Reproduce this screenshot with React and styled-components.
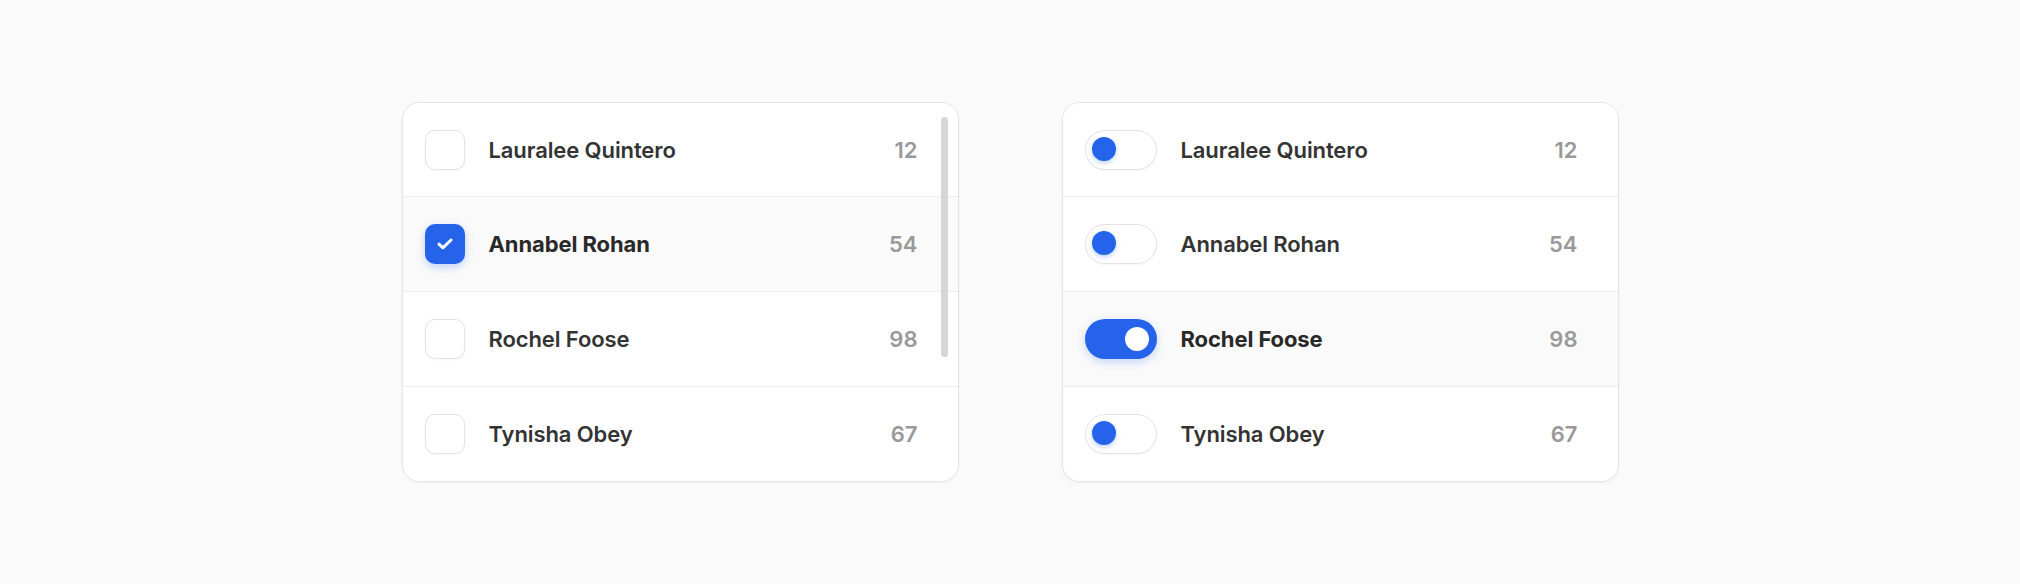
import styled, { createGlobalStyle, css } from 'styled-components';

const people = [
  { name: 'Lauralee Quintero', count: 12 },
  { name: 'Annabel Rohan', count: 54 },
  { name: 'Rochel Foose', count: 98 },
  { name: 'Tynisha Obey', count: 67 },
];

const GlobalStyle = createGlobalStyle`
  html, body {
    margin: 0;
    padding: 0;
    background: #fafafa;
    font-family: Inter, "Noto Sans", sans-serif;
  }
  * { box-sizing: border-box; }
`;

const Page = styled.div`
  min-height: 100vh;
  display: flex;
  align-items: center;
  justify-content: center;
  gap: 103px;
`;

const Card = styled.div`
  position: relative;
  width: 557px;
  background: #ffffff;
  border: 1px solid #e4e4e4;
  border-radius: 18px;
  box-shadow: 0 1px 3px rgba(0, 0, 0, 0.05);
  overflow: hidden;
`;

const Row = styled.div`
  display: flex;
  align-items: center;
  gap: 24px;
  height: 95px;
  padding: 0 40px 0 22px;
  background: ${(p) => (p.$active ? '#fafafa' : '#ffffff')};
  &:first-child {
    height: 93px;
  }
  & + & {
    border-top: 1px solid #ededed;
  }
`;

const Name = styled.span`
  flex: 1;
  font-size: 22px;
  font-weight: ${(p) => (p.$active ? 700 : 600)};
  color: ${(p) => (p.$active ? '#292929' : '#333333')};
  letter-spacing: -0.1px;
`;

const Count = styled.span`
  font-size: 22px;
  font-weight: 600;
  color: #999999;
`;

const Box = styled.span`
  flex: none;
  width: 40px;
  height: 40px;
  border-radius: 10px;
  display: flex;
  align-items: center;
  justify-content: center;
  ${(p) =>
    p.$checked
      ? css`
          background: #2563eb;
          box-shadow: 0 3px 8px rgba(37, 99, 235, 0.28);
        `
      : css`
          background: #ffffff;
          border: 1.5px solid #e3e3e3;
          box-shadow: 0 1px 2px rgba(0, 0, 0, 0.04);
        `}
`;

const Track = styled.span`
  position: relative;
  flex: none;
  width: 72px;
  height: 40px;
  border-radius: 20px;
  ${(p) =>
    p.$on
      ? css`
          background: #2563eb;
          box-shadow: 0 3px 8px rgba(37, 99, 235, 0.25);
        `
      : css`
          background: #ffffff;
          border: 1.5px solid #e3e3e3;
          box-shadow: 0 1px 2px rgba(0, 0, 0, 0.04);
        `}
`;

const Knob = styled.span`
  position: absolute;
  top: ${(p) => (p.$on ? 8 : 6)}px;
  left: ${(p) => (p.$on ? 40 : 6)}px;
  width: 24px;
  height: 24px;
  border-radius: 50%;
  background: ${(p) => (p.$on ? '#ffffff' : '#2563eb')};
  box-shadow: ${(p) => (p.$on ? 'none' : '0 2px 5px rgba(37, 99, 235, 0.3)')};
`;

const Thumb = styled.div`
  position: absolute;
  top: 14px;
  right: 10px;
  width: 7px;
  height: 240px;
  border-radius: 4px;
  background: #d6d6d6;
`;

const Check = () => (
  <svg width="16" height="12" viewBox="0 0 16 12" fill="none">
    <path d="M2 6.2l3.8 3.6L14 2" stroke="#fff" strokeWidth="3" strokeLinecap="round" strokeLinejoin="round" />
  </svg>
);

const App = () => (
  <>
    <GlobalStyle />
    <Page>
      <Card>
        {people.map((p, i) => (
          <Row key={p.name} $active={i === 1}>
            <Box $checked={i === 1}>{i === 1 && <Check />}</Box>
            <Name $active={i === 1}>{p.name}</Name>
            <Count>{p.count}</Count>
          </Row>
        ))}
        <Thumb />
      </Card>
      <Card>
        {people.map((p, i) => (
          <Row key={p.name} $active={i === 2}>
            <Track $on={i === 2}>
              <Knob $on={i === 2} />
            </Track>
            <Name $active={i === 2}>{p.name}</Name>
            <Count>{p.count}</Count>
          </Row>
        ))}
      </Card>
    </Page>
  </>
);

export default App;
